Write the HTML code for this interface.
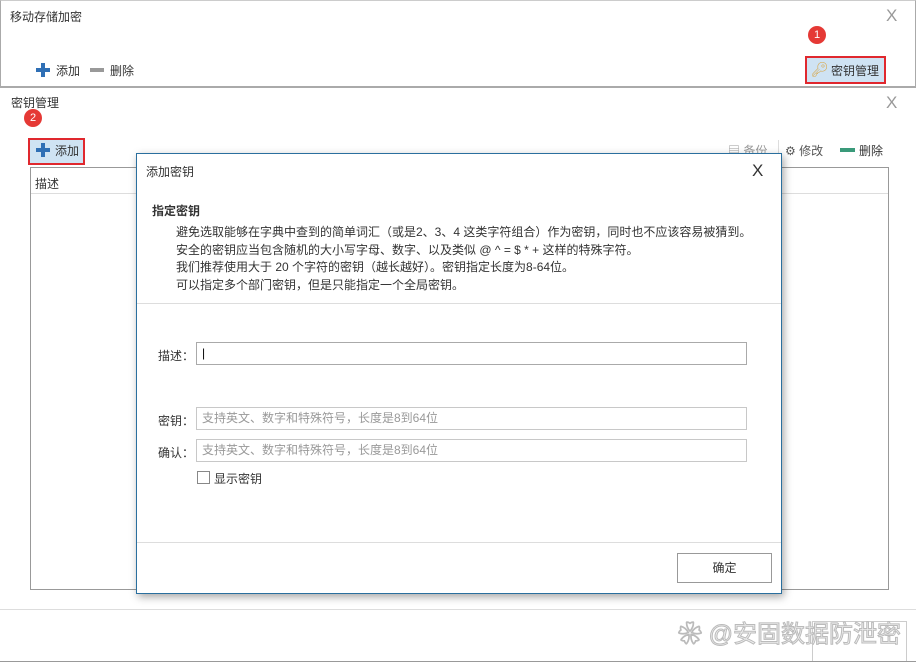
<!DOCTYPE html>
<html><head><meta charset="utf-8"><style>
*{margin:0;padding:0;box-sizing:border-box}
body{width:916px;height:662px;background:#fff;position:relative;overflow:hidden;font-family:"Liberation Sans","Noto Sans CJK SC",sans-serif;font-size:12px;color:#333}
.a{position:absolute;white-space:nowrap}
.x{position:absolute;font-size:17px;color:#999;font-family:"Liberation Sans",sans-serif;font-weight:normal}
.rc{position:absolute;width:18px;height:18px;border-radius:50%;background:#e53935;color:#fff;font-size:11px;text-align:center;line-height:18px}
.plus{position:absolute;width:14px;height:14px}
.plus:before{content:"";position:absolute;left:5px;top:0;width:4px;height:14px;background:#2f6fb5}
.plus:after{content:"";position:absolute;left:0;top:5px;width:14px;height:4px;background:#2f6fb5}
.inp{position:absolute;border:1px solid #c8c8c8;height:23px;left:196px;width:551px;color:#999;padding-left:5px;line-height:21px}
</style></head><body>
<div style="position:absolute;left:0;top:0;width:916px;height:87px;border:1px solid #aaa;border-top-color:#ccc"></div>
<div class="a" style="left:10px;top:8px">移动存储加密</div>
<div class="x" style="left:886px;top:6px">X</div>
<div class="plus" style="left:36px;top:63px"></div>
<div class="a" style="left:56px;top:62px">添加</div>
<div class="a" style="left:90px;top:68px;width:14px;height:4px;background:#999"></div>
<div class="a" style="left:110px;top:62px">删除</div>
<div class="rc" style="left:808px;top:26px">1</div>
<div class="a" style="left:805px;top:56px;width:81px;height:28px;border:2px solid #e0282e;background:#cfe3f3"></div>
<div class="a" style="left:811px;top:61px;font-size:14px;color:#d9a441">🔑︎</div>
<div class="a" style="left:831px;top:62px">密钥管理</div>

<div class="a" style="left:0;top:87px;width:916px;height:1px;background:#aaa"></div>
<div class="a" style="left:11px;top:94px">密钥管理</div>
<div class="x" style="left:886px;top:93px">X</div>
<div class="rc" style="left:24px;top:109px">2</div>
<div class="a" style="left:28px;top:138px;width:57px;height:27px;border:2px solid #e0282e;background:#cfe3f3"></div>
<div class="plus" style="left:36px;top:143px"></div>
<div class="a" style="left:55px;top:142px">添加</div>
<div class="a" style="left:728px;top:142px;color:#999">▤ 备份</div>
<div class="a" style="left:778px;top:140px;width:1px;height:20px;background:#ddd"></div>
<div class="a" style="left:785px;top:142px;color:#555">⚙ 修改</div>
<div class="a" style="left:840px;top:148px;width:15px;height:4px;background:#3a9a7a"></div>
<div class="a" style="left:859px;top:142px">删除</div>
<div class="a" style="left:30px;top:167px;width:859px;height:423px;border:1px solid #999"></div>
<div class="a" style="left:31px;top:193px;width:857px;height:1px;background:#ddd"></div>
<div class="a" style="left:35px;top:175px">描述</div>
<div class="a" style="left:0;top:609px;width:916px;height:1px;background:#ddd"></div>
<div class="a" style="left:812px;top:621px;width:95px;height:41px;border:1px solid #ccc"></div>
<div class="a" style="left:0;top:661px;width:916px;height:1px;background:#999"></div>
<div class="a" style="left:678px;top:614px;font-size:24px;color:#f0f0f0;-webkit-text-stroke:1px #bbb">❀ @安固数据防泄密</div>

<div class="a" style="left:136px;top:153px;width:646px;height:441px;background:#fff;border:1px solid #2a6f9e;box-shadow:2px 3px 8px rgba(0,0,0,.35)">
<div class="a" style="left:9px;top:9px">添加密钥</div>
<div class="x" style="left:615px;top:7px;color:#333">X</div>
<div class="a" style="left:15px;top:48px;font-weight:bold">指定密钥</div>
<div class="a" style="left:39px;top:70px;line-height:17.5px;font-size:12px">避免选取能够在字典中查到的简单词汇（或是2、3、4 这类字符组合）作为密钥，同时也不应该容易被猜到。<br>安全的密钥应当包含随机的大小写字母、数字、以及类似 @ ^ = $ * + 这样的特殊字符。<br>我们推荐使用大于 20 个字符的密钥（越长越好）。密钥指定长度为8-64位。<br>可以指定多个部门密钥，但是只能指定一个全局密钥。</div>
<div class="a" style="left:0;top:149px;width:644px;height:1px;background:#ddd"></div>
<div class="a" style="left:21px;top:193px">描述：</div>
<div class="inp" style="left:59px;top:188px;border-color:#aaa;color:#000">|</div>
<div class="a" style="left:21px;top:258px">密钥：</div>
<div class="inp" style="left:59px;top:253px">支持英文、数字和特殊符号，长度是8到64位</div>
<div class="a" style="left:21px;top:290px">确认：</div>
<div class="inp" style="left:59px;top:285px">支持英文、数字和特殊符号，长度是8到64位</div>
<div class="a" style="left:60px;top:317px;width:13px;height:13px;border:1px solid #888"></div>
<div class="a" style="left:77px;top:316px">显示密钥</div>
<div class="a" style="left:0;top:388px;width:644px;height:1px;background:#ddd"></div>
<div class="a" style="left:540px;top:399px;width:95px;height:30px;border:1px solid #999;text-align:center;line-height:28px">确定</div>
</div>
</body></html>
